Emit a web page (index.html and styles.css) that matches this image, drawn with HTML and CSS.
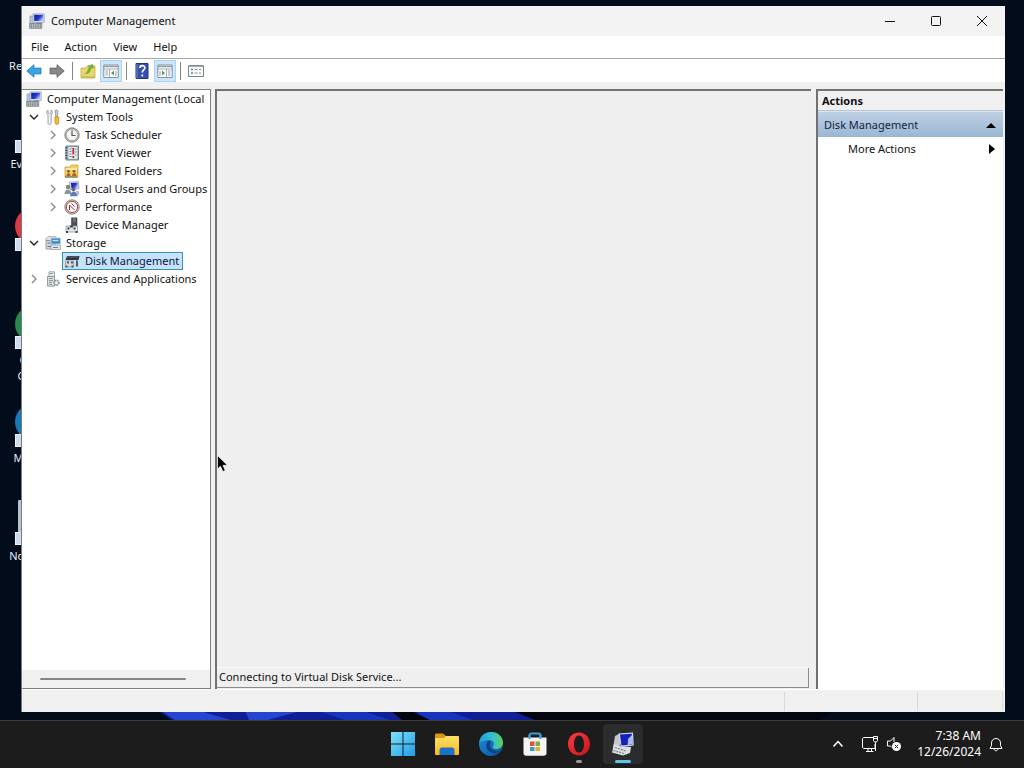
FILE: index.html
```html
<!DOCTYPE html>
<html lang="en">
<head>
<meta charset="utf-8">
<meta name="viewport" content="width=device-width, initial-scale=1">
<title>Computer Management</title>
<link rel="stylesheet" href="styles.css">
</head>
<body>
<svg class="defs" aria-hidden="true">
  <defs>
    <linearGradient id="g-screen" x1="0" y1="0" x2="1" y2=".6"><stop offset="0" stop-color="#0b1aa8"/><stop offset=".6" stop-color="#2036cc"/><stop offset="1" stop-color="#a9bcff"/></linearGradient>
    <linearGradient id="g-win" x1="0" y1="0" x2="1" y2="1"><stop offset="0" stop-color="#7fe3fb"/><stop offset="1" stop-color="#1f9be6"/></linearGradient>
    <linearGradient id="g-folder" x1="0" y1="0" x2="0" y2="1"><stop offset="0" stop-color="#ffdf6b"/><stop offset="1" stop-color="#f6b91c"/></linearGradient>
    <linearGradient id="g-edge" x1="0" y1="0" x2="1" y2="0"><stop offset="0" stop-color="#1f9fe0"/><stop offset=".6" stop-color="#35c1c9"/><stop offset="1" stop-color="#5fd257"/></linearGradient>
    <linearGradient id="g-edge2" x1="0" y1="0" x2="1" y2="1"><stop offset="0" stop-color="#1c8fdc"/><stop offset="1" stop-color="#0f4f9e"/></linearGradient>
    <linearGradient id="g-opera" x1="0" y1="0" x2="1" y2="1"><stop offset="0" stop-color="#ff3b46"/><stop offset="1" stop-color="#c4141f"/></linearGradient>
  </defs>
  <symbol id="i-computer" viewBox="0 0 16 16">
    <path d="M1 3h4v8H1z" fill="#b9c4d3" stroke="#7f8b9b" stroke-width=".6"/>
    <path d="M4 .8h11.300v8.700H4z" fill="#d5dbe8" stroke="#8e97ab" stroke-width=".6"/>
    <path d="M5.200 1.800h9v6.200h-9z" fill="url(#g-screen)"/>
    <path d="m8 9.500h4l1.500 1.500H7z" fill="#7d8490"/>
    <path d="M.6 10.500h12.200v4.900H.6z" fill="#c4c8cb" stroke="#70767d" stroke-width=".7"/>
    <path d="M1.500 12h10.500M1.500 13.900h10.500" stroke="#5c636b" stroke-width="1" stroke-dasharray="1.500 .8"/>
  </symbol>
  <symbol id="i-tools" viewBox="0 0 16 16">
    <path d="M3 1v3l1.500 1L6 4V1c1.600.8 2 3.600.2 5v8.300c0 1.500-3.200 1.500-3.200 0V6C1 4.500 1.400 1.800 3 1z" fill="#f0f1f3" stroke="#8b8f96" stroke-width=".8"/>
    <path d="m10 1.500 2-.7 1 1.200-.6 6h-1.600z" fill="#c9ccd0" stroke="#777" stroke-width=".6"/>
    <path d="M9.800 8h4l-.3 6.500c-.3 1.200-3 1.200-3.300 0z" fill="#f3bb2e" stroke="#bd821a" stroke-width=".7"/>
  </symbol>
  <symbol id="i-clock" viewBox="0 0 16 16">
    <circle cx="8" cy="8" r="7.200" fill="#b7b9b5" stroke="#73766f" stroke-width=".8"/>
    <circle cx="8" cy="8" r="5.600" fill="#f4f5f2" stroke="#999" stroke-width=".5"/>
    <path d="M8 3.500V8.500h3.600" fill="none" stroke="#4f5962" stroke-width="1.200"/>
  </symbol>
  <symbol id="i-event" viewBox="0 0 16 16">
    <path d="M2 1h12.500v14H2z" fill="#a8b7c4" stroke="#59636c" stroke-width=".8"/>
    <path d="M4.500 2.200h8.700v11.600H4.500z" fill="#e7edf2"/>
    <path d="M1 3h2.500M1 5.500h2.500M1 8h2.500M1 10.500h2.500M1 13h2.500" stroke="#4b5158"/>
    <path d="M5.500 4h2M5.500 6.500h2M5.500 9h2M5.500 11.500h2M11 4h1.500M11 7h1.500M11 10h1.500" stroke="#6181a6"/>
    <path d="M9.300 3v6.500M9.300 11v2" stroke="#c7281d" stroke-width="1.800"/>
  </symbol>
  <symbol id="i-shared" viewBox="0 0 16 16">
    <path d="M1 4h5l1.200-2H14v12.500H1z" fill="#f1ce69" stroke="#c79a32" stroke-width=".7"/>
    <path d="M2 6h11" stroke="#fff0ae" stroke-width="1.500"/>
    <circle cx="4.500" cy="8.300" r="1.300" fill="#77502d"/><circle cx="10" cy="8.300" r="1.300" fill="#77502d"/>
    <path d="M2.500 13c0-4 4-4 4 0zM8 13c0-4 4.500-4 4.500 0z" fill="#ad6526"/>
    <path d="M1 13.800h12" stroke="#5a7a8f"/>
  </symbol>
  <symbol id="i-users" viewBox="0 0 16 16">
    <path d="m5.500 1 9-.3.500 7-9 .7z" fill="#d8dce8" stroke="#8288a0" stroke-width=".6"/>
    <path d="m7 2 6.500-.3.400 5-6.500.500z" fill="url(#g-screen)"/>
    <circle cx="4" cy="6" r="2.200" fill="#8d846e"/>
    <path d="M.5 13c0-6 7-6 7 0z" fill="#7f9c98"/>
    <circle cx="9.500" cy="8.500" r="2.100" fill="#6b6580"/>
    <path d="M6 15.300c0-6 7.500-6 7.500 0z" fill="#6679b7"/>
    <path d="M12 10h3v4h-2z" fill="#b4b8c7"/>
  </symbol>
  <symbol id="i-perf" viewBox="0 0 16 16">
    <circle cx="8" cy="8" r="7.200" fill="#c9c8c5" stroke="#77726e" stroke-width=".8"/>
    <circle cx="8" cy="8" r="5.600" fill="#fff" stroke="#b64440" stroke-width="1"/>
    <path d="M5.500 11V6l5 5M7.500 4.500l3 3" fill="none" stroke="#b52925" stroke-width="1"/>
  </symbol>
  <symbol id="i-device" viewBox="0 0 16 16">
    <path d="M7.500.8H13v8H7.500z" fill="#4b5159" stroke="#2d3136" stroke-width=".5"/>
    <path d="M9 2h3M9 4h3" stroke="#858d96"/>
    <path d="M2 9h11.500v6H2z" fill="#e5e6e7" stroke="#84888c" stroke-width=".7"/>
    <path d="M3.500 10.500h2v2h-2zm6 0h2v2h-2zM2 14h2v2H2zm9.500 0h2v2h-2zM6 8.500h3v2H6z" fill="#3e444b"/>
  </symbol>
  <symbol id="i-storage" viewBox="0 0 16 16">
    <path d="M1 3.500 3 1.500h8v4H1z" fill="#dde1e4" stroke="#8c959c" stroke-width=".6"/>
    <path d="M1 5.500h9V14H1z" fill="#cfd4d8" stroke="#7d878f" stroke-width=".7"/>
    <path d="M2.500 8h5M2.500 11.500h5" stroke="#737d86"/>
    <path d="M6 3h9.500v6H6z" fill="#3b8ac8" stroke="#c9d8e2" stroke-width=".8"/>
    <path d="M7.500 5.500h6" stroke="#c4e7ff" stroke-width="1.300"/>
    <path d="M6 10h9.500v4.500H6z" fill="#e5e8ea" stroke="#8b949b" stroke-width=".7"/>
    <path d="M8 12.500h5" stroke="#747d85"/>
  </symbol>
  <symbol id="i-disk" viewBox="0 0 16 16">
    <path d="M3 3h12.500l-1 4H1.500z" fill="#30363c"/>
    <path d="M3 4h11" stroke="#707880" stroke-width=".8"/>
    <path d="M1.500 8h8v6h-8z" fill="#d4dadd" stroke="#828a90" stroke-width=".6"/>
    <path d="M3 8.500h2v2H3zm4 0h2v2H7zM1.500 12.500h2v2h-2zm6 0h2v2h-2zM12 7.500h2v6h-2z" fill="#535b63"/>
  </symbol>
  <symbol id="i-services" viewBox="0 0 16 16">
    <path d="M4 .8h5.500v5H4z" fill="#e4e8e7" stroke="#869490" stroke-width=".8"/>
    <path d="M2.500 5.500h7v9.700h-7z" fill="#d7dddc" stroke="#7f8d89" stroke-width=".8"/>
    <path d="M5 2.500h3M4 7.500h4M4 9.500h4M4 11.500h3M4 13.500h3" stroke="#7d8e8b" stroke-width=".8"/>
    <circle cx="11.500" cy="11.800" r="2.400" fill="#eef1f3" stroke="#8696a2" stroke-width="1.700" stroke-dasharray="1.500 .6"/>
  </symbol>
  <symbol id="i-arrow" viewBox="0 0 16 16">
    <path d="M.8 8 8 1.700v3.400h7v5.800H8v3.400z" stroke-width=".8"/>
  </symbol>
  <symbol id="i-up" viewBox="0 0 16 16">
    <path d="M1 5h5l1.500-2H15v12H1z" fill="#e9d771" stroke="#b6a23b" stroke-width=".7"/>
    <path d="M3 11c5 0 4-5 6-7L7 3l6-2 1 5-2-1c-2 2-1 7-9 6z" fill="#7cad37"/>
    <path d="M2 14h12" stroke="#c7a945"/>
  </symbol>
  <symbol id="i-pane" viewBox="0 0 16 16">
    <path d="M.8 2h14.400v12.500H.8z" fill="#fff" stroke="#7c878e" stroke-width=".9"/>
    <path d="M1 3.500h14" stroke="#929da5" stroke-width="1.500"/>
    <path d="M1 6h14M6.500 6v8" stroke="#8d989e" stroke-width=".8"/>
    <path d="M2.500 8h2.500M2.500 10h2.500M2.500 12h2.500M13 8v5" stroke="#7a97aa" stroke-width=".9"/>
    <path d="m11 7.500-3 2.500 3 2.500z" fill="#48a34d"/>
  </symbol>
  <symbol id="i-pane-right" viewBox="0 0 16 16">
    <path d="M.8 2h14.400v12.500H.8z" fill="#fff" stroke="#7c878e" stroke-width=".9"/>
    <path d="M1 3.500h14" stroke="#929da5" stroke-width="1.500"/>
    <path d="M1 6h14M9.500 6v8" stroke="#8d989e" stroke-width=".8"/>
    <path d="M11 8h2.500M11 10h2.500M11 12h2.500M3 8v5" stroke="#7a97aa" stroke-width=".9"/>
    <path d="m5 7.500 3 2.500-3 2.500z" fill="#48a34d"/>
  </symbol>
  <symbol id="i-help" viewBox="0 0 16 16">
    <path d="M2 .5h12v15H2z" fill="#354fae" stroke="#20377f"/>
    <path d="M3 1v14" stroke="#7288cb"/>
    <path d="M5.800 5c.2-3.500 5.400-3 5 0-.2 2-2.500 2-2.500 4.500M8.300 11.500v2" fill="none" stroke="#fff" stroke-width="1.700"/>
  </symbol>
  <symbol id="i-list" viewBox="0 0 16 16">
    <path d="M.5 2.500h15v11H.5z" fill="#fafafa" stroke="#7c868d"/>
    <path d="M1 3.500h14" stroke="#a8b2bc"/>
    <path d="M3 6.500h2M3 10h2" stroke="#5282af" stroke-width="1.500"/>
    <path d="M6.500 6.500h3M6.500 10h3M11 6.500h2M11 10h2" stroke="#8b989e"/>
  </symbol>
  <symbol id="i-chev" viewBox="0 0 10 10"><path d="m3 1 4 4-4 4" fill="none" stroke="currentColor" stroke-width="1.400"/></symbol>
</svg>

<main class="desktop">
  <svg class="wallpaper" viewBox="0 0 1024 12" preserveAspectRatio="none" aria-hidden="true">
    <path d="M157 0h382l12 12H172z" fill="#101f96"/>
    <path d="M160 0h36l35 12h-56zM245 0h60l-38 12h-18z" fill="#2446cf"/>
    <path d="M315 0h45l30 12h-45zM415 0h30l28 12h-50z" fill="#1634bc"/>
    <path d="M390 0h20l20 12h-28zM510 0h325l-16 12H535z" fill="#03050f"/>
  </svg>
  <div class="shortcut s1"><span>Recycle Bin</span></div>
  <div class="shortcut s2"><i class="link"></i><span>Everything</span></div>
  <div class="shortcut s3"><i class="art red"></i><i class="link"></i></div>
  <div class="shortcut s4"><i class="art green"></i><i class="link"></i><span>Google<br>Chrome</span></div>
  <div class="shortcut s5"><i class="art blue"></i><i class="link"></i><span>Microsoft</span></div>
  <div class="shortcut s6"><i class="art paper"></i><i class="link"></i><span>Notepad++</span></div>

  <section class="window" aria-label="Computer Management">
    <header class="titlebar">
      <svg class="ico"><use href="#i-computer"/></svg>
      <h1>Computer Management</h1>
      <div class="caption">
        <button aria-label="Minimize"><svg viewBox="0 0 12 12"><path d="M1 6.500h10"/></svg></button>
        <button aria-label="Maximize"><svg viewBox="0 0 12 12"><rect x="1.500" y="1.500" width="9" height="9" rx="1"/></svg></button>
        <button aria-label="Close"><svg viewBox="0 0 12 12"><path d="m1 1 10 10M11 1 1 11"/></svg></button>
      </div>
    </header>
    <nav class="menubar" aria-label="Menu">
      <button>File</button><button>Action</button><button>View</button><button>Help</button>
    </nav>
    <div class="toolbar">
      <button aria-label="Back" class="back"><svg class="ico"><use href="#i-arrow"/></svg></button>
      <button aria-label="Forward" class="forward"><svg class="ico"><use href="#i-arrow"/></svg></button>
      <span class="sep"></span>
      <button aria-label="Up one level"><svg class="ico"><use href="#i-up"/></svg></button>
      <button aria-label="Show or hide console tree" class="on"><svg class="ico"><use href="#i-pane"/></svg></button>
      <span class="sep"></span>
      <button aria-label="Help"><svg class="ico"><use href="#i-help"/></svg></button>
      <button aria-label="Show or hide action pane" class="on"><svg class="ico"><use href="#i-pane-right"/></svg></button>
      <span class="sep"></span>
      <button aria-label="View list"><svg class="ico"><use href="#i-list"/></svg></button>
    </div>
    <div class="panes">
      <aside class="treepane">
        <ul class="tree">
          <li class="root"><svg class="ico"><use href="#i-computer"/></svg><span>Computer Management (Local</span></li>
          <li><svg class="chev open"><use href="#i-chev"/></svg><svg class="ico"><use href="#i-tools"/></svg><span>System Tools</span></li>
          <li class="sub"><svg class="chev"><use href="#i-chev"/></svg><svg class="ico"><use href="#i-clock"/></svg><span>Task Scheduler</span></li>
          <li class="sub"><svg class="chev"><use href="#i-chev"/></svg><svg class="ico"><use href="#i-event"/></svg><span>Event Viewer</span></li>
          <li class="sub"><svg class="chev"><use href="#i-chev"/></svg><svg class="ico"><use href="#i-shared"/></svg><span>Shared Folders</span></li>
          <li class="sub"><svg class="chev"><use href="#i-chev"/></svg><svg class="ico"><use href="#i-users"/></svg><span>Local Users and Groups</span></li>
          <li class="sub"><svg class="chev"><use href="#i-chev"/></svg><svg class="ico"><use href="#i-perf"/></svg><span>Performance</span></li>
          <li class="sub leaf"><svg class="ico"><use href="#i-device"/></svg><span>Device Manager</span></li>
          <li><svg class="chev open"><use href="#i-chev"/></svg><svg class="ico"><use href="#i-storage"/></svg><span>Storage</span></li>
          <li class="sub leaf"><div class="selected"><svg class="ico"><use href="#i-disk"/></svg><span>Disk Management</span></div></li>
          <li><svg class="chev"><use href="#i-chev"/></svg><svg class="ico"><use href="#i-services"/></svg><span>Services and Applications</span></li>
        </ul>
        <div class="hscroll"><div class="thumb"></div></div>
      </aside>
      <section class="content"><p class="progress">Connecting to Virtual Disk Service...</p></section>
      <aside class="actions">
        <h2>Actions</h2>
        <button class="group">Disk Management<svg viewBox="0 0 10 6"><path d="M0 6 5 1l5 5z"/></svg></button>
        <button class="more">More Actions<svg viewBox="0 0 6 10"><path d="m0 0 6 5-6 5z"/></svg></button>
      </aside>
    </div>
    <footer class="status"><span></span><span></span><span></span></footer>
  </section>
  <svg class="cursor" viewBox="0 0 12 18" aria-hidden="true"><path d="M.5.500v13.500l3-2.800 2.300 5.300 2.500-1L6 10.300h4.500z" fill="#000" stroke="#fff" stroke-width=".7"/></svg>
</main>

<footer class="taskbar">
  <div class="apps">
    <button aria-label="Start"><svg viewBox="0 0 24 24"><path d="M0 0h11.500v11.500H0zM12.500 0H24v11.500H12.500zM0 12.500h11.500V24H0zM12.500 12.500H24V24H12.500z" fill="url(#g-win)"/></svg></button>
    <button aria-label="File Explorer"><svg viewBox="0 0 24 24"><path d="M0 3c0-1 .5-1.500 1.500-1.500H8L11 4v4H0z" fill="#d9980f"/><path d="M0 6h9l2-2h12c.7 0 1 .5 1 1v17c0 .7-.5 1-1 1H1c-.7 0-1-.3-1-1z" fill="url(#g-folder)"/><path d="M4.500 23v-5c0-1.500 1-2.500 2.500-2.500h10c1.500 0 2.500 1 2.500 2.500v5z" fill="#1c72c8"/></svg></button>
    <button aria-label="Edge"><svg viewBox="0 0 24 24"><circle cx="12" cy="12" r="12" fill="url(#g-edge2)"/><path d="M.2 10C1.500 3.500 6.500 0 12 0c7 0 12 5 12 10.500 0 4-3 6.500-6.500 6.500-3 0-4.500-1.300-3.500-2.700 2-2.500.5-6.300-4-6.300-4.500 0-8 2.500-9.800 2z" fill="url(#g-edge)"/><path d="M9 9c-3 2.500-2.500 10 5 12 3 .7 6-.5 8-3-5 3-11 0-11-5 0-2 .8-3 1.500-3.500C11.500 9 10 8.500 9 9z" fill="#104283"/></svg></button>
    <button aria-label="Store"><svg viewBox="0 0 24 24"><path d="M6.500 7V3.500c0-1.500.7-2 2-2h7c1.300 0 2 .5 2 2V7" fill="none" stroke="#31a6cf" stroke-width="2"/><path d="M.5 5.500h23V21c0 1.700-1 2.700-2.700 2.700H3.200C1.500 23.700.5 22.700.5 21z" fill="#f4f4f5"/><path d="M5.500 3h2v4h-2zM16.500 3h2v4h-2z" fill="#31a6cf"/><path d="M7 9.500h4.500V14H7z" fill="#e34f36"/><path d="M12.500 9.500H17V14h-4.500z" fill="#75ae39"/><path d="M7 15h4.500v4H7z" fill="#2d9bd5"/><path d="M12.500 15H17v4h-4.500z" fill="#e8ae28"/></svg></button>
    <button aria-label="Opera" class="running"><svg viewBox="0 0 24 24"><path fill-rule="evenodd" d="M12 .5C5.500.500 1 5.500 1 12s4.500 11.500 11 11.500S23 18.500 23 12 18.500.500 12 .5zm0 3c3 0 5 3.500 5 8.500s-2 8.500-5 8.500-5-3.500-5-8.500 2-8.500 5-8.500z" fill="url(#g-opera)"/></svg></button>
    <button aria-label="Computer Management" class="running active"><svg viewBox="0 0 24 24"><path d="m4 4 5-2.500v12L2 16z" fill="#c3c7cc"/><path d="M7.500 1.500 22 .5l.8 13-13 1.500z" fill="#d5d9e5"/><path d="m9 2.500 11.800-.8.700 10.800-11 1z" fill="#1620b8"/><path d="m17 7 4-4 .7 9.300-5 .7z" fill="#a8bcff"/><path d="m3 12 7 2.500 10 .5-1 6-7 2.500-11-3z" fill="#dcdfe1"/><path d="m4 15.500 11 3.500M2.500 18.500 13 21.500" stroke="#7b8086" stroke-width="1.200" stroke-dasharray="2 1"/></svg></button>
  </div>
  <div class="tray">
    <button aria-label="Hidden icons"><svg class="t12" viewBox="0 0 12 12"><path d="m1.500 8.500 4.500-5 4.500 5" stroke-width="1.500"/></svg></button>
    <button aria-label="Network"><svg class="t18" viewBox="0 0 18 18"><path d="M12 2.500H3c-.8 0-1.500.7-1.500 1.500v8c0 .8.700 1.500 1.500 1.500h11V9M5 16.500h7.500M7 13.500v3M10.500 13.500v3"/><path d="M12.500 1.500h4v4l-1 1.500h-2l-1-1.500zM14.500 7v9M12.500 3.500h4"/></svg></button>
    <button aria-label="Volume muted"><svg class="t16" viewBox="0 0 16 16"><path d="M8 6V1.500L4.500 5h-3v5h3L6 11.500"/><circle cx="10.500" cy="10.500" r="4.500" fill="#fff" stroke="none"/><path d="m8.800 8.800 3.400 3.400M12.200 8.800l-3.400 3.400" stroke="#222"/></svg></button>
    <button class="clock"><span>7:38 AM</span><span>12/26/2024</span></button>
    <button aria-label="Notifications"><svg class="t16" viewBox="0 0 16 16"><path d="M3.500 7c0-6 9-6 9 0v2.500l1.500 3H2l1.500-3zM6 13c.5 2.300 3.500 2.300 4 0"/></svg></button>
  </div>
</footer>
</body>
</html>
```

FILE: styles.css
```css
* { box-sizing: border-box; }
body {
  margin: 0;
  height: 100vh;
  display: flex;
  flex-direction: column;
  overflow: hidden;
  background: #020c1b;
  color: #111;
  font: 11px/18px "Noto Sans", "Open Sans", sans-serif;
}
button {
  display: flex;
  align-items: center;
  padding: 0;
  border: 0;
  background: none;
  color: inherit;
  font: inherit;
}
h1, h2, p, ul { margin: 0; padding: 0; font: inherit; }
svg { display: block; flex: none; }
.defs { position: absolute; width: 0; height: 0; }
.ico { width: 16px; height: 16px; }

.desktop { position: relative; flex: 1; min-height: 0; background: #020c1b; }
.wallpaper { position: absolute; left: 0; bottom: 0; width: 100%; height: 10px; }
.shortcut { position: absolute; left: 0; width: 76px; height: 80px; color: #e8ecf2; text-align: center; }
.shortcut span { position: absolute; top: 48px; left: 0; width: 76px; line-height: 16px; }
.shortcut .link { position: absolute; left: 15px; top: 32px; width: 12px; height: 13px; background: #cfdbe9; border: 1px solid #eef4fa; }
.shortcut .art { position: absolute; left: 15px; top: 0; width: 46px; height: 40px; border-radius: 50%; }
.red { background: #dc3943; }
.green { background: #268b4b; }
.blue { background: #1977b8; }
.shortcut .paper { left: 18px; background: #b9c3cd; border-radius: 1px; }
.s1 { top: 10px; }
.s2 { top: 108px; }
.s3 { top: 206px; }
.s4 { top: 304px; }
.s5 { top: 402px; }
.s6 { top: 500px; }

.window {
  position: absolute;
  inset: 6px 19px 8px 21px;
  display: flex;
  flex-direction: column;
  background: #f0f0f0;
  border-left: 1px solid #777b80;
}
.titlebar { display: flex; align-items: center; gap: 6px; height: 30px; padding-left: 7px; background: #f3f3f3; }
.caption { display: flex; margin-left: auto; height: 100%; }
.caption button { width: 46px; justify-content: center; }
.caption svg { width: 12px; height: 12px; fill: none; stroke: #111; }
.menubar { display: flex; height: 23px; padding-left: 1px; background: #fff; border-bottom: 1px solid #a7a7a7; }
.menubar button { padding: 0 8px; }
.toolbar { display: flex; align-items: center; gap: 1px; height: 23px; padding-left: 1px; background: #fff; }
.toolbar button { width: 22px; height: 22px; justify-content: center; }
.toolbar .on { background: #cce6fb; border: 1px solid #a9d4f5; }
.toolbar .back { fill: #35a5e6; stroke: #2379b5; }
.toolbar .forward { fill: #858789; stroke: #5c5e60; }
.forward svg { transform: scaleX(-1); }
.sep { width: 1px; height: 18px; margin: 0 3px; background: #858585; }

.panes {
  flex: 1;
  min-height: 0;
  display: grid;
  grid-template-columns: 189px minmax(0, 1fr) 187px;
  column-gap: 4px;
  padding: 7px 2px 0 0;
}
.treepane { display: flex; flex-direction: column; min-width: 0; background: #fff; border: 1px solid #7e7e7e; border-left: 0; }
.tree { flex: 1; overflow: hidden; list-style: none; }
.tree li { display: flex; align-items: center; height: 18px; gap: 4px; padding-left: 7px; white-space: nowrap; }
.tree .root { padding-left: 4px; gap: 5px; }
.tree .sub { padding-left: 26px; }
.tree .leaf { padding-left: 42px; }
.chev { width: 10px; height: 10px; margin-right: 2px; color: #8a8a8a; }
.chev.open { transform: rotate(90deg); color: #222; }
.tree .ico { margin-right: 1px; }
.tree .root .ico { margin-right: 0; }
.selected { display: flex; align-items: center; gap: 4px; height: 18px; margin-left: -2px; padding: 0 3px 0 1px; background: #c5e3f7; border: 1px solid #3c8fbd; color: #10124c; }
.hscroll { height: 18px; padding: 8px 24px 0 18px; background: #f0f0f0; }
.thumb { height: 2px; border-radius: 1px; background: #868686; }
.content { display: flex; flex-direction: column; justify-content: flex-end; margin-right: 1px; padding: 0 2px 1px 0; border: solid #717171; border-width: 2px 0 0 2px; background: #efefef; }
.progress { height: 20px; padding-left: 2px; border: solid #8c8c8c; border-width: 0 1px 1px 0; box-shadow: 0 -1px #fafafa; }
.actions { background: #fff; border: solid #717171; border-width: 2px 0 0 2px; }
.actions h2 { height: 20px; padding-left: 4px; line-height: 20px; font-weight: 700; background: #f0f0f0; border-bottom: 1px solid #b8c4d0; }
.actions button { width: 100%; height: 24px; justify-content: space-between; }
.actions svg { fill: #000; }
.actions .group { height: 26px; padding: 0 7px 0 6px; color: #10253f; background: linear-gradient(#bdd0e4, #9bb6d3); border-top: 1px solid #dbe5ef; }
.group svg { width: 10px; height: 6px; }
.actions .more { padding: 0 8px 0 30px; }
.more svg { width: 6px; height: 10px; }
.status { display: grid; grid-template-columns: minmax(0, 1fr) 133px 85px; height: 23px; padding: 2px 2px 1px 0; border-top: 1px solid #fff; }
.status span { border-right: 1px solid #d9d9d9; }
.cursor { position: absolute; left: 217px; top: 455px; width: 12px; height: 18px; }

.taskbar {
  display: grid;
  grid-template-columns: 1fr auto 1fr;
  align-items: center;
  height: 48px;
  padding: 0 20px 2px 22px;
  background: #1c1c1c;
  border-top: 1px solid #393b3e;
  color: #fff;
}
.apps { display: flex; grid-column: 2; gap: 4px; }
.apps button { position: relative; width: 40px; height: 40px; justify-content: center; border-radius: 4px; }
.apps svg { width: 24px; height: 24px; }
.apps .active { background: #2b2c2d; }
.running::after { content: ""; position: absolute; bottom: 1px; left: 17px; width: 6px; height: 3px; border-radius: 2px; background: #999; }
.active::after { left: 12px; width: 16px; background: #5fc3e6; }
.tray { display: flex; justify-content: flex-end; align-items: center; gap: 7px; }
.tray svg { fill: none; stroke: #fff; }
.t12 { width: 12px; height: 12px; margin-right: 10px; }
.t16 { width: 16px; height: 16px; }
.t18 { width: 18px; height: 18px; }
.tray .clock { flex-direction: column; align-items: flex-end; margin-left: 8px; font-size: 12px; line-height: 16px; }
```
